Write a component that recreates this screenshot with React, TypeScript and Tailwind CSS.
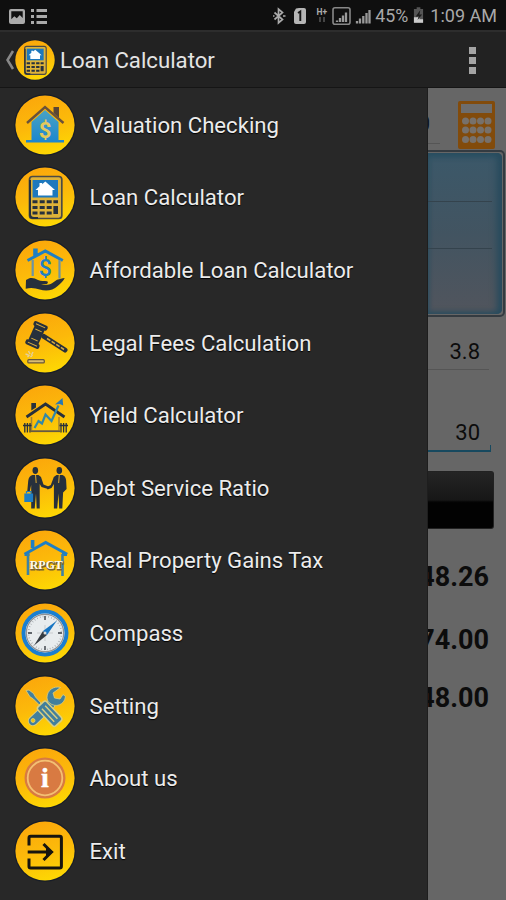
import type { ReactNode } from "react";

const NAVY = "#27303c";
const BLUE = "#1f7fc4";

function Disc({ id, size = "size-[60px]", children }: { id: string; size?: string; children: ReactNode }) {
  return (
    <svg viewBox="0 0 60 60" className={`${size} shrink-0 overflow-visible`}>
      <defs>
        <linearGradient id={id} x1="0.3" y1="0" x2="0.6" y2="1">
          <stop offset="0" stopColor="#fba70b" />
          <stop offset="0.5" stopColor="#fcb90a" />
          <stop offset="1" stopColor="#fdd803" />
        </linearGradient>
      </defs>
      <circle cx="30" cy="30" r="30.8" fill="#171d28" />
      <circle cx="30" cy="30" r="29.6" fill={`url(#${id})`} />
      {children}
    </svg>
  );
}

function HouseDollar() {
  return (
    <>
      <defs>
        <linearGradient id="houseFill" x1="0" y1="0" x2="0" y2="1">
          <stop offset="0" stopColor="#4aa3c4" />
          <stop offset="1" stopColor="#1b86cf" />
        </linearGradient>
      </defs>
      <path d="M38.5 12h5.5v11l-5.5-5z" fill="#5a4636" />
      <path d="M16.500 45V27L30 15l13.500 12v18H49v2.500H11V45z" fill="url(#houseFill)" />
      <path d="M12 28 30 12l18.500 16" fill="none" stroke="#6b5239" strokeWidth="2.400" />
      <text x="30" y="43" textAnchor="middle" fontSize="22" fontWeight="700" fill="#e3c95c" fontFamily="Roboto, sans-serif">$</text>
    </>
  );
}

function CalculatorArt() {
  return (
    <>
      <rect x="14.500" y="9.500" width="32.300" height="42" rx="3" fill="#dfb338" stroke="#4b4a45" strokeWidth="1.700" />
      <path d="M15 13v34q0 4 4 4h4" fill="none" stroke={NAVY} strokeWidth="2" />
      <rect x="17.600" y="13" width="25.400" height="17.500" fill="#1d78bd" />
      <path d="M30.300 14.500 40 23h-2.500v5.500H23V23h-2.500l4-3.700V16h2.700v1.200z" fill="#fff" />
      <g fill={NAVY}>
        <path d="M17.500 33.300h5v3h-5zM24.700 33.300h5v3h-5zM31.700 33.300h5v3h-5zM38.400 33.300h4.600v3h-4.600z" />
        <path d="M17.500 39h5v3h-5zM24.700 39h5v3h-5zM31.700 39h5v3h-5zM38.400 39h4.600v8h-4.600z" />
        <path d="M17.500 44.500h5v3h-5zM24.700 44.500h5v3h-5zM31.700 44.500h5v3h-5z" />
      </g>
    </>
  );
}

function HandHouse() {
  return (
    <>
      <path d="M12.500 20.500 30.300 11l17.500 9.500M21.200 15.500V10h-1.500v6" fill="none" stroke={BLUE} strokeWidth="3" />
      <path d="M17.700 20v16M44.500 20v18.500" stroke="#6d94a4" strokeWidth="2.200" />
      <text x="30.300" y="36" textAnchor="middle" fontSize="23" fontWeight="500" fill={BLUE} fontFamily="Roboto, sans-serif">$</text>
      <path d="M11 40c4-3 8-2.500 12 0 3 1.500 6 .5 9 1.200 1.600.8.8 2.700-1 2.800h-5c4 1.400 8 .8 11-.8l5-3.500c3-.6 5-1.600 7.700-1.800-1 3-4 5-7 8-5 5-12 5.200-18 3.600-4-1-8-2.500-14-.7z" fill={NAVY} />
    </>
  );
}

function Gavel() {
  return (
    <>
      <path d="M29 23.500 50 37" stroke={NAVY} strokeWidth="5" strokeLinecap="round" />
      <path d="m32 25.500 17 11" stroke="#d6aa42" strokeWidth="1.500" strokeDasharray="4 1.500" />
      <g transform="translate(21.500 22) rotate(24)" fill={NAVY}>
        <rect x="-5.500" y="-8" width="11" height="16" />
        <rect x="-7.500" y="-12.500" width="15" height="5" rx="2" />
        <rect x="-7.500" y="7.500" width="15" height="5" rx="2" />
        <path d="M-5-10H5M-5 10H5M-3.500-5h7M-3.500 5h7" stroke="#d6aa42" strokeWidth="1" />
      </g>
      <rect x="12.800" y="46.700" width="16.500" height="3.200" rx="1" fill="#d9bd72" stroke="#65563b" strokeWidth="1.200" />
      <path d="m10.500 41 3 1m0-4 1.500 3m3-2-1.500 3m-1 2 2-2m-5 2 2-2" stroke="#e3cf9c" strokeWidth="1.400" />
    </>
  );
}

function YieldHouse() {
  return (
    <>
      <path d="M16.300 18h4.700v4.500l-4.700 3z" fill={NAVY} />
      <path d="M11.500 32 30.500 19l19 13" fill="none" stroke={NAVY} strokeWidth="2.800" />
      <path d="M16.500 32v14H44V32" fill="none" stroke="#a38137" strokeWidth="1.500" />
      <path d="M16 46.300h29" stroke="#655a42" strokeWidth="1.600" />
      <path d="M9.800 38v9.500M12.400 38v9.500M15 38v9.500M46 38v9.500M48.600 38v9.500M51.200 38v9.500" stroke={NAVY} strokeWidth="1.300" />
      <path d="M8 40.500h8.500M44.500 40.500H53" stroke={NAVY} strokeWidth="1.500" />
      <path d="m19.500 43 4-7 3.500 2.500 3.500-9 6 6.500 7-15.500" fill="none" stroke="#3288a9" strokeWidth="2.200" />
      <path d="m47.500 13 .7 7.500-3.500-1.500-4.700.5z" fill="#2678b6" />
    </>
  );
}

function Handshake() {
  return (
    <>
      <g fill={NAVY}>
        <ellipse cx="20.300" cy="12.500" rx="2.800" ry="3.400" />
        <ellipse cx="44.300" cy="12.500" rx="2.800" ry="3.400" />
        <path d="M17.500 17h6l2.500 2 2.500 7.500 5.500 2.300-1 2.200-6.500-2-1.800-3V50.500h-3L21 35.500l-1.300 15h-3.500V27L14.500 34h-2.300l1-11q.5-5 4.300-6z" />
        <path d="M41.500 17h6q3 1 3.600 5l.5 9-3.500 3.500-.8 16h-3.100L43.500 35.500l-1.300 15h-3.300V26l-2.400 4-4 1.500-.5-2.500 3.800-2 3-8z" />
      </g>
      <path d="m20.500 17 .7 8M44.300 17l-.7 8" stroke="#cf9f31" strokeWidth="1.100" />
      <rect x="9.300" y="35.500" width="8.800" height="8.500" fill={BLUE} />
      <path d="M11.500 35.500v-2H16v2" fill="none" stroke={BLUE} strokeWidth="1.200" />
    </>
  );
}

function RpgtHouse() {
  return (
    <>
      <path d="M17.600 18v-8" stroke={BLUE} strokeWidth="3.600" />
      <path d="M9.500 24.200 30.700 12.500l21.500 11.700M9.500 24.500h5M47 24.500h5" fill="none" stroke={BLUE} strokeWidth="3" />
      <path d="M13 24v21M47.500 24v22" stroke="#3c82a4" strokeWidth="2.600" />
      <g fontFamily="Liberation Serif, serif" fontWeight="700" fontSize="12">
        <text x="15.500" y="39.500" textLength="33" lengthAdjust="spacingAndGlyphs" fill="#5d4a20" stroke="#7a6431" strokeWidth="1.200">RPGT</text>
        <text x="14.800" y="38.800" textLength="33" lengthAdjust="spacingAndGlyphs" fill="#fffdf0">RPGT</text>
      </g>
    </>
  );
}

function CompassArt() {
  return (
    <>
      <circle cx="30" cy="30" r="21.500" fill="#e8ecee" stroke="#1b7fd0" strokeWidth="4" />
      <circle cx="30" cy="30" r="18.700" fill="none" stroke="#8f9296" strokeWidth="1.200" />
      <circle cx="30" cy="30" r="16.500" fill="none" stroke="#9da3a8" strokeWidth="1.600" strokeDasharray="0.700 2.180" />
      <path d="M30 13v4M30 43v4M13 30h4M43 30h4" stroke="#60656b" strokeWidth="1.800" />
      <path d="M30 22v16M22 30h16" stroke="#c9cccf" strokeWidth="1" />
      <path d="m19 42.500 9-14.500 4 4z" fill="#343b43" />
      <path d="m42 17.500-14 10.500 4 4z" fill="#1775c3" />
      <circle cx="30" cy="30" r="1.500" fill="#ddd" />
    </>
  );
}

function Tools() {
  return (
    <>
      <g stroke="#d9cf83" strokeWidth="0.800" fill="#427f9c">
        <path d="M35 29 18 45" strokeWidth="10" stroke="#d9cf83" strokeLinecap="round" />
        <path d="M35 29 18 45" strokeWidth="8.500" stroke="#427f9c" strokeLinecap="round" />
        <path d="M45.500 11.500c-7-2-13.500 3-13.500 10 0 2 1 4 2.500 5.500 6 5 15 2 16-6.500L48 18.500l-3 4.500-5.500-1-1.500-5z" />
        <circle cx="18" cy="44.500" r="2" fill="#f1c30d" />
        <path d="m11 14.500 3-.5 4.500 3.500 2 3.500L26 27l-1.800 1.800-6-6-3.200-2z" />
        <g transform="translate(34 37) rotate(-43)">
          <rect x="-6" y="-12" width="12" height="26" rx="2.500" strokeWidth="1.500" />
          <path d="M-2.200-8v18M2.200-8v18" stroke="#d9cf83" strokeWidth="1.400" />
        </g>
      </g>
    </>
  );
}

function InfoArt() {
  return (
    <>
      <circle cx="30" cy="30" r="20.500" fill="#d87a42" />
      <circle cx="30" cy="30" r="17.300" fill="#d87a42" stroke="#f3c073" strokeWidth="1.800" />
      <text x="30" y="38.800" textAnchor="middle" fontSize="28" fontWeight="700" fill="#fff" stroke="#fff" strokeWidth="0.500" fontFamily="Liberation Serif, serif">i</text>
    </>
  );
}

function ExitArt() {
  return (
    <g fill="none" stroke="#17150f" strokeWidth="3">
      <path d="M14 24.500V17q0-1.700 1.700-1.700h29Q46.400 15.300 46.400 17v28.300q0 1.700-1.700 1.700h-29Q14 47 14 45.300V37.500" />
      <path d="M12.700 31H35" />
      <path d="m28.500 23 8 8-8 8" />
      <path d="m31 25.500 7.500 5.500-7.500 5.500z" fill="#17150f" stroke="none" />
    </g>
  );
}

const items: { label: string; art: ReactNode }[] = [
  { label: "Valuation Checking", art: <HouseDollar /> },
  { label: "Loan Calculator", art: <CalculatorArt /> },
  { label: "Affordable Loan Calculator", art: <HandHouse /> },
  { label: "Legal Fees Calculation", art: <Gavel /> },
  { label: "Yield Calculator", art: <YieldHouse /> },
  { label: "Debt Service Ratio", art: <Handshake /> },
  { label: "Real Property Gains Tax", art: <RpgtHouse /> },
  { label: "Compass", art: <CompassArt /> },
  { label: "Setting", art: <Tools /> },
  { label: "About us", art: <InfoArt /> },
  { label: "Exit", art: <ExitArt /> },
];

function StatusBar() {
  return (
    <header className="flex h-[30px] items-center justify-between bg-[#0f0f0f] pt-px pr-[9px] pl-[9px] text-[#a9a9a9]">
      <svg viewBox="0 0 40 18" className="h-[18px] w-10" fill="#aaa">
        <path fillRule="evenodd" d="M2 2h12q2 0 2 2v11q0 2-2 2H2q-2 0-2-2V4q0-2 2-2zm.3 2.200v8l3-3 2.500 2 3-3.200 2.900 3V4.200z" />
        <path d="M22 2h3v3h-3zM27.500 2H38v3H27.500zM22 8h3v3h-3zM27.500 8H38v3H27.500zM22 14h3v3h-3zM27.500 14H38v3H27.500z" />
      </svg>
      <div className="flex items-center">
        <svg viewBox="0 0 101 20" className="h-5 w-[101px]">
          <path d="m1.500 6.500 8 7-4 3.500V3l4 3.500-8 7M-.5 10h2M10 10h2.500" fill="none" stroke="#aaa" strokeWidth="1.700" />
          <path d="m23 2.500 3-.5h5q2 0 2 2v12q0 2-2 2h-8q-2 0-2-2V6z" fill="#b5b5b5" />
          <path d="m25 7 2.300-1.500V15" fill="none" stroke="#151515" strokeWidth="1.900" />
          <text x="43.500" y="9" fontSize="8.500" fontWeight="700" fill="#aaa" fontFamily="Roboto, sans-serif">H+</text>
          <path d="M47 11v5M51 11v5" stroke="#444" strokeWidth="2" />
          <rect x="60" y="1.800" width="17" height="16.500" rx="2" fill="none" stroke="#888" strokeWidth="1.600" />
          <path d="M64 14.500v1.500M67 12v4M70 9.500V16M73 6.500V16" stroke="#999" strokeWidth="2.300" />
          <path d="M84 15v2.500M87 12.500v5M90.300 10v7.500M93.500 7v10.500M96.500 4v13.500" stroke="#999" strokeWidth="2.300" />
        </svg>
        <span className="ml-px w-[35px] text-[17.800px] leading-5 whitespace-nowrap">45%</span>
        <svg viewBox="0 0 12 18" className="mr-[6px] ml-[3px] h-[17px] w-[11px]">
          <path d="M4 0h4v2h3v15H1V2h3z" fill="#555" />
          <path d="M1 11h4l2-3v5h4v4H1z" fill="#ccc" />
          <path d="m8 3-5 7h3l-1 4 5-6H7z" fill="#1b1b1b" />
        </svg>
        <span className="text-[18px] leading-5 whitespace-nowrap">1:09 AM</span>
      </div>
    </header>
  );
}

function ActionBar() {
  return (
    <div className="flex h-[58px] items-center border-t-2 border-b border-t-[#2d2d2d] border-b-[#151515] bg-[#222] pt-px pr-[30px] pl-[5px]">
      <svg viewBox="0 0 10 20" className="h-5 w-[10px]">
        <path d="M8 1 2.500 10 8 19" fill="none" stroke="#888" strokeWidth="2.500" />
      </svg>
      <Disc id="discHeader" size="size-10">
        <CalculatorArt />
      </Disc>
      <h1 className="ml-[5px] flex-1 text-[22.200px] leading-7 whitespace-nowrap text-[#e4e4e4]">Loan Calculator</h1>
      <div className="flex flex-col gap-[3px]">
        <i className="size-[7px] bg-[#a4a4a4]" />
        <i className="size-[7px] bg-[#a4a4a4]" />
        <i className="size-[7px] bg-[#a4a4a4]" />
      </div>
    </div>
  );
}

function Backdrop() {
  return (
    <section className="flex min-w-0 flex-1 flex-col overflow-hidden bg-[#666] text-[#0c0c0c]">
      <div className="flex h-[61px] shrink-0 justify-between">
        <div className="flex h-[56px] w-[12px] items-end justify-end border-b border-[#555]">
          <span className="mr-[10px] pb-[7px] text-[22px] leading-6">0</span>
        </div>
        <svg viewBox="0 0 37 48" className="mt-[13px] mr-[11px] h-[48px] w-[37px]">
          <rect width="37" height="48" rx="2" fill="#824b0b" />
          <rect x="3" y="3" width="31" height="9" fill="#6d6d6d" />
          <g fill="#77716b">
            {[20, 29, 38.5].map((y) =>
              [7.5, 15, 22.5, 30].map((x) => <circle key={`${x}-${y}`} cx={x} cy={y} r="3.500" />)
            )}
          </g>
        </svg>
      </div>
      <div className="mt-px mr-px h-[167px] shrink-0 rounded-r-[5px] border-y-2 border-r-2 border-[#343b41] p-px pl-0">
        <div className="flex h-full flex-col rounded-r-[5px] bg-linear-to-b from-[#3b5869] via-[#425461] to-[#51555d] pr-[10px] shadow-[inset_-5px_0_7px_#284b5d,inset_0_4px_5px_#2b5164,inset_0_-2px_4px_#34505f]">
          <div className="h-[49px] border-b border-[#34434d]" />
          <div className="h-[47px] border-b border-[#34434d]" />
        </div>
      </div>
      <div className="mr-[17px] flex h-[53px] shrink-0 items-end justify-end border-b border-[#555] pr-[9px] pb-[5px]">
        <span className="text-[22px] leading-6">3.8</span>
      </div>
      <div className="mr-[15px] flex h-[82px] shrink-0 items-end justify-end border-r border-b-2 border-[#17495f] pr-[10px] pb-[5px] [border-image:linear-gradient(to_top,#17495f_6px,transparent_6px)_1]">
        <span className="text-[22px] leading-6">30</span>
      </div>
      <div className="mt-[19px] mr-[12px] h-[58px] shrink-0 rounded-r-[3px] border border-l-0 border-[#222] bg-linear-to-b from-[#252525] from-0% via-[#171717] via-50% to-[#020202] to-55%" />
      <div className="mr-[17px] flex flex-col items-end text-[27px] leading-8 font-bold whitespace-nowrap">
        <span className="mt-[32px]">1,348.26</span>
        <span className="mt-[31px]">41,674.00</span>
        <span className="mt-[26px]">161,148.00</span>
      </div>
    </section>
  );
}

export default function App() {
  return (
    <div className="flex h-[900px] w-[506px] flex-col overflow-hidden bg-[#222] font-[Roboto,sans-serif]">
      <StatusBar />
      <ActionBar />
      <main className="flex min-h-0 flex-1">
        <nav className="w-[428px] shrink-0 border-r border-[#1e1e1e] bg-[#282828] pt-[0.500px]">
          <ul>
            {items.map((item, i) => (
              <li key={item.label} className="flex h-[72.600px] items-center gap-[14.500px] pl-[15px]">
                <Disc id={`disc${i}`}>{item.art}</Disc>
                <span className="text-[22.150px] leading-7 whitespace-nowrap text-[#ececec] [text-shadow:0_1px_1px_#000]">{item.label}</span>
              </li>
            ))}
          </ul>
        </nav>
        <Backdrop />
      </main>
    </div>
  );
}
